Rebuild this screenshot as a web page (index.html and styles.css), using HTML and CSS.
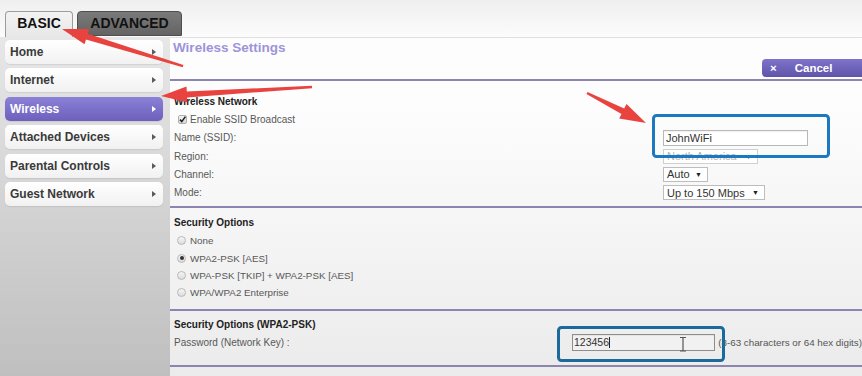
FILE: index.html
```html
<!DOCTYPE html>
<html>
<head>
<meta charset="utf-8">
<title>Wireless Settings</title>
<link rel="stylesheet" href="styles.css">
</head>
<body>
<div class="page">
  <div class="tabs">
    <div class="tab tab-basic">BASIC</div>
    <div class="tab tab-adv">ADVANCED</div>
  </div>
  <div class="body">
    <nav class="sidebar">
      <div class="nav-item">Home<span class="caret"></span></div>
      <div class="nav-item">Internet<span class="caret"></span></div>
      <div class="nav-item active">Wireless<span class="caret"></span></div>
      <div class="nav-item">Attached Devices<span class="caret"></span></div>
      <div class="nav-item">Parental Controls<span class="caret"></span></div>
      <div class="nav-item">Guest Network<span class="caret"></span></div>
    </nav>
    <main class="main">
      <header class="head">
        <h1 class="title">Wireless Settings</h1>
        <div class="actions">
          <button class="cancel"><span class="x">&#215;</span>Cancel</button>
        </div>
      </header>
      <section class="sec sec1">
        <div class="row heading">Wireless Network</div>
        <div class="row">
          <span class="check"><svg width="9" height="9" viewBox="0 0 9 9"><path d="M2 4.6 L3.8 6.6 L7.4 1.6" fill="none" stroke="#222" stroke-width="1.6"/></svg></span>Enable SSID Broadcast
        </div>
        <div class="row"><span class="label">Name (SSID):</span><span class="field ssid">JohnWiFi</span></div>
        <div class="row"><span class="label">Region:</span><span class="select region"><span>North America</span><span class="arr">&#9660;</span></span></div>
        <div class="row"><span class="label">Channel:</span><span class="select channel"><span>Auto</span><span class="arr">&#9660;</span></span></div>
        <div class="row"><span class="label">Mode:</span><span class="select mode"><span>Up to 150 Mbps</span><span class="arr">&#9660;</span></span></div>
      </section>
      <section class="sec sec2">
        <div class="row heading">Security Options</div>
        <div class="row opt"><span class="radio"></span>None</div>
        <div class="row opt"><span class="radio on"></span>WPA2-PSK [AES]</div>
        <div class="row opt"><span class="radio"></span>WPA-PSK [TKIP] + WPA2-PSK [AES]</div>
        <div class="row opt"><span class="radio"></span>WPA/WPA2 Enterprise</div>
      </section>
      <section class="sec sec3">
        <div class="row heading">Security Options (WPA2-PSK)</div>
        <div class="row"><span class="label">Password (Network Key) :</span><span class="field pw"><span class="caret-text">123456</span></span><span class="hint">(8-63 characters or 64 hex digits)</span></div>
      </section>
    </main>
  </div>
  <svg class="overlay" width="862" height="376" viewBox="0 0 862 376">
    <g fill="#e8433f">
      <polygon points="183.4,64.9 87.8,33.7 89.2,29 62,29 84.5,44.3 86,39.5 182.7,67.2"/>
      <polygon points="311.9,85.8 186.8,91.5 186.5,86.5 161,96 187.4,102.4 187.1,97.4 312.1,88.2"/>
      <polygon points="586.5,94.1 621.5,113.9 619.2,118.4 646,123 626.5,104.1 624.2,108.6 587.5,91.9"/>
    </g>
    <rect x="653.5" y="115.5" width="175" height="41" rx="3" fill="none" stroke="#1c79bf" stroke-width="3"/>
    <rect x="558.5" y="327.5" width="165" height="33" rx="3" fill="none" stroke="#1b6a9c" stroke-width="3"/>
    <path d="M680 337.5 h6 M683 337.5 v13.5 M680 351 h6" fill="none" stroke="#555" stroke-width="1.2"/>
  </svg>
</div>
</body>
</html>
```

FILE: styles.css
```css
* {
  box-sizing: border-box;
  margin: 0;
  padding: 0;
}

html, body {
  width: 862px;
  height: 376px;
  overflow: hidden;
}

body {
  font-family: "Liberation Sans", Arial, sans-serif;
  background: #f4f4f4;
}

.page {
  position: relative;
  width: 862px;
  height: 376px;
  display: flex;
  flex-direction: column;
}

/* ---- top tabs ---- */
.tabs {
  height: 37px;
  flex: none;
  display: flex;
  align-items: flex-end;
  gap: 4px;
  padding-left: 5px;
  background: linear-gradient(#efefef, #fcfcfc);
}

.tab {
  display: flex;
  align-items: center;
  justify-content: center;
  font-size: 14px;
  font-weight: bold;
  color: #111;
  border-radius: 4px 4px 0 0;
}

.tab-basic {
  width: 68px;
  height: 26px;
  padding-bottom: 3px;
  background: linear-gradient(#f3f3f3, #e7e7e7);
  border: 1px solid #9c9c9c;
  border-bottom: none;
}

.tab-adv {
  width: 105px;
  height: 25px;
  margin-bottom: 1px;
  padding-bottom: 2px;
  background: linear-gradient(#7a7a7a, #646464);
  border: 1px solid #4e4e4e;
}

/* ---- layout ---- */
.body {
  flex: 1;
  display: flex;
  min-height: 0;
}

.sidebar {
  width: 170px;
  flex: none;
  padding: 3px 7px 0 5px;
  display: flex;
  flex-direction: column;
  gap: 4.4px;
  background: linear-gradient(#e7e7e7, #bfbfbf);
}

.nav-item {
  height: 24px;
  border-radius: 5px;
  background: linear-gradient(#ffffff, #f1f1f1);
  box-shadow: 0 1px 1px rgba(0, 0, 0, 0.08);
  display: flex;
  align-items: center;
  justify-content: space-between;
  padding: 0 7px 0 5px;
  font-size: 12px;
  font-weight: bold;
  color: #3a3a3a;
}

.caret {
  width: 0;
  height: 0;
  border-left: 4px solid #5a5a5a;
  border-top: 3px solid transparent;
  border-bottom: 3px solid transparent;
}

.nav-item.active {
  background: linear-gradient(#8b81d7, #6c60bc);
  color: #fff;
}

.nav-item.active .caret {
  border-left-color: #fff;
}

.main {
  flex: 1;
  min-width: 0;
  border-top: 1px solid #e0e0e0;
  background: linear-gradient(#fdfdfd 20%, #ebebeb);
}

/* ---- header ---- */
.head {
  padding: 2px 0 2px 3px;
  border-bottom: 2px solid #8b85b0;
}

.title {
  font-size: 13.5px;
  font-weight: bold;
  line-height: 16px;
  color: #9d94da;
}

.actions {
  display: flex;
  justify-content: flex-end;
  margin-top: 3px;
  margin-right: -10px;
}

.cancel {
  width: 110px;
  height: 18px;
  border: none;
  border-radius: 4px 0 0 4px;
  background: linear-gradient(#7e73ca, #5f54aa);
  color: #fff;
  font-family: "Liberation Sans", Arial, sans-serif;
  font-size: 11.5px;
  font-weight: bold;
  display: flex;
  align-items: center;
  padding-left: 8px;
}

.cancel .x {
  margin-right: 18px;
}

/* ---- sections ---- */
.sec {
  padding-left: 4px;
  border-bottom: 2px solid #8b85b0;
}

.sec1 {
  padding-top: 11px;
  padding-bottom: 4px;
}

.sec2 {
  padding-top: 6px;
  padding-bottom: 8px;
}

.sec3 {
  padding-top: 4px;
  padding-bottom: 13px;
}

.row {
  height: 18.3px;
  display: flex;
  align-items: center;
  font-size: 10px;
  color: #585858;
  white-space: nowrap;
}

.row.opt {
  height: 17.3px;
  font-size: 9.8px;
}

.heading {
  font-size: 10px;
  font-weight: bold;
  color: #222;
}

.label {
  width: 489px;
  flex: none;
}

.sec3 .label {
  width: 398px;
}

.check {
  width: 9px;
  height: 9px;
  margin: 0 3px 0 4px;
  background: linear-gradient(#f4f4f4, #d8d8d8);
  border: 1px solid #b0b0b0;
  border-radius: 2px;
  display: flex;
  align-items: center;
  justify-content: center;
  overflow: visible;
}

.check svg {
  flex: none;
}

.radio {
  width: 9px;
  height: 9px;
  margin: 0 4px 0 3px;
  border-radius: 50%;
  border: 1px solid #b8b8b8;
  background: linear-gradient(#f6f6f6, #dcdcdc);
  display: flex;
  align-items: center;
  justify-content: center;
}

.radio.on::after {
  content: "";
  width: 4px;
  height: 4px;
  border-radius: 50%;
  background: #333;
}

.field {
  height: 16px;
  border: 1px solid #b8b8b8;
  background: #fff;
  font-size: 11px;
  color: #333;
  padding: 0 2px;
  display: flex;
  align-items: center;
  box-shadow: inset 0 1px 1px rgba(0, 0, 0, 0.06);
}

.ssid {
  width: 145px;
}

.select {
  height: 15px;
  border: 1px solid #bdbdbd;
  background: #fff;
  font-size: 11px;
  color: #333;
  padding: 0 5px 0 3px;
  display: flex;
  align-items: center;
  justify-content: space-between;
}

.select .arr {
  font-size: 7px;
  color: #222;
}

.region {
  width: 95px;
  color: #b4b4b4;
  border-color: #d0d0d0;
}

.channel {
  width: 45px;
}

.mode {
  width: 102px;
}

.pw {
  width: 145px;
  height: 17px;
  border-color: #8e8e8e;
  background: #f1f1f1;
  font-size: 10.5px;
  padding-left: 1px;
}

.caret-text {
  border-right: 1px solid #222;
  line-height: 11px;
}

.hint {
  margin-left: 3px;
  font-size: 9.8px;
  color: #555;
}

/* ---- annotation overlay ---- */
.overlay {
  position: absolute;
  left: 0;
  top: 0;
  pointer-events: none;
}
```
